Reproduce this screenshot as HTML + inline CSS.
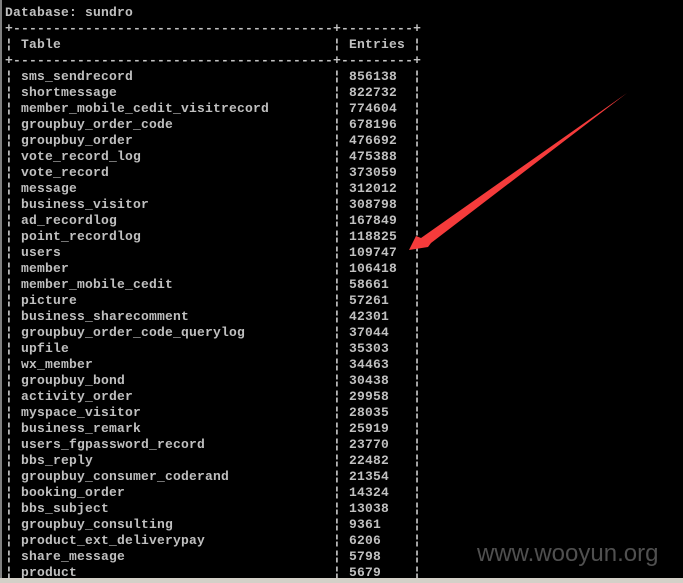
<!DOCTYPE html>
<html><head><meta charset="utf-8"><style>
html,body{margin:0;padding:0;background:#000;width:683px;height:583px;overflow:hidden;position:relative}
pre{position:absolute;left:5px;top:5px;margin:0;font-family:"Liberation Mono",monospace;font-weight:bold;font-size:13px;letter-spacing:0.2px;line-height:16px;color:#c0c0c0;white-space:pre}
.lb{position:absolute;left:0;top:0;width:2px;height:578px;background:#808080}
.bot{position:absolute;left:0;top:578px;width:683px;height:5px;background:#d4d0c8}
.wm{position:absolute;left:477px;top:540px;font-family:"Liberation Sans",sans-serif;font-size:24px;color:#505050}
svg{position:absolute;left:0;top:0}
</style></head><body>
<div class="lb"></div>
<pre>Database: sundro
+----------------------------------------+---------+
¦ Table                                  ¦ Entries ¦
+----------------------------------------+---------+
¦ sms_sendrecord                         ¦ 856138  ¦
¦ shortmessage                           ¦ 822732  ¦
¦ member_mobile_cedit_visitrecord        ¦ 774604  ¦
¦ groupbuy_order_code                    ¦ 678196  ¦
¦ groupbuy_order                         ¦ 476692  ¦
¦ vote_record_log                        ¦ 475388  ¦
¦ vote_record                            ¦ 373059  ¦
¦ message                                ¦ 312012  ¦
¦ business_visitor                       ¦ 308798  ¦
¦ ad_recordlog                           ¦ 167849  ¦
¦ point_recordlog                        ¦ 118825  ¦
¦ users                                  ¦ 109747  ¦
¦ member                                 ¦ 106418  ¦
¦ member_mobile_cedit                    ¦ 58661   ¦
¦ picture                                ¦ 57261   ¦
¦ business_sharecomment                  ¦ 42301   ¦
¦ groupbuy_order_code_querylog           ¦ 37044   ¦
¦ upfile                                 ¦ 35303   ¦
¦ wx_member                              ¦ 34463   ¦
¦ groupbuy_bond                          ¦ 30438   ¦
¦ activity_order                         ¦ 29958   ¦
¦ myspace_visitor                        ¦ 28035   ¦
¦ business_remark                        ¦ 25919   ¦
¦ users_fgpassword_record                ¦ 23770   ¦
¦ bbs_reply                              ¦ 22482   ¦
¦ groupbuy_consumer_coderand             ¦ 21354   ¦
¦ booking_order                          ¦ 14324   ¦
¦ bbs_subject                            ¦ 13038   ¦
¦ groupbuy_consulting                    ¦ 9361    ¦
¦ product_ext_deliverypay                ¦ 6206    ¦
¦ share_message                          ¦ 5798    ¦
¦ product                                ¦ 5679    ¦</pre>
<div class="wm">www.wooyun.org</div>
<svg width="683" height="583"><polygon points="627,93 431,243 428,247 409,250 416,236 421,238" fill="#f53b3b"/></svg>
<div class="bot"></div>
</body></html>
